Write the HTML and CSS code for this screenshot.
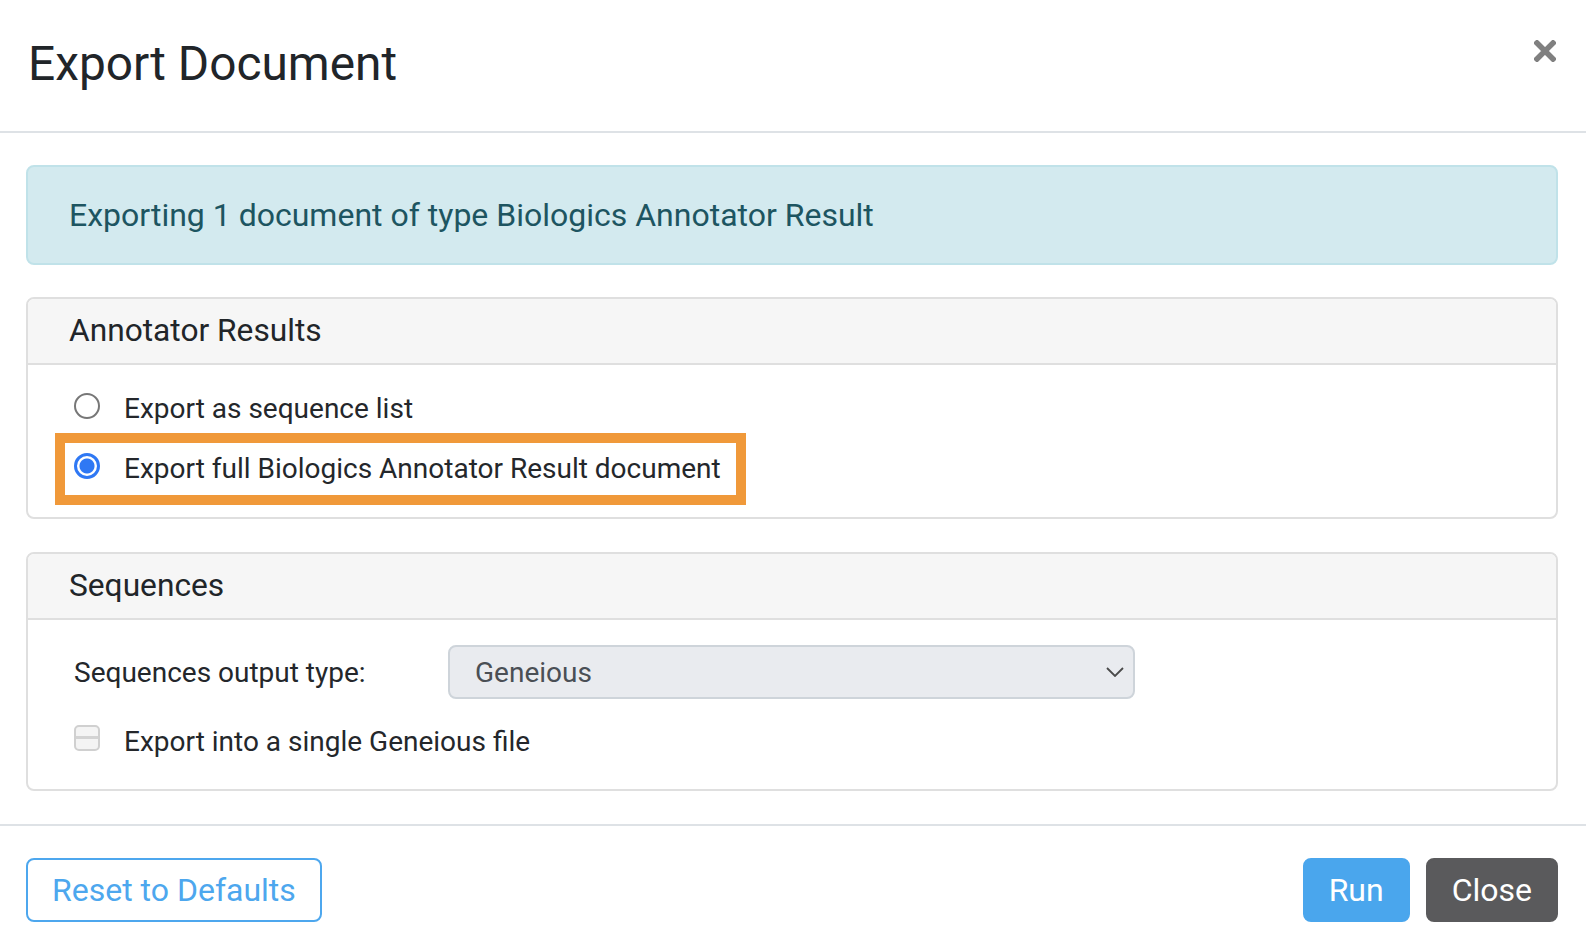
FILE: index.html
```html
<!DOCTYPE html>
<html lang="en">
<head>
    <meta charset="UTF-8">
    <title>Export Document</title>
    <link rel="stylesheet" href="styles.css">
</head>
<body>

<div class="modal">
    <div class="modal-header">
        <h4 class="modal-title">Export Document</h4>
        <svg class="close" width="22" height="22" viewBox="0 0 22 22">
            <path d="M3 3 L19 19 M19 3 L3 19" stroke="#808080" stroke-width="5.5" stroke-linecap="square"/>
        </svg>
    </div>

    <div class="modal-body">
        <div class="alert">Exporting 1 document of type Biologics Annotator Result</div>

        <div class="card">
            <div class="card-header">Annotator Results</div>
            <div class="card-body options">
                <div class="radio-row">
                    <span class="radio"></span>
                    <span class="option-label">Export as sequence list</span>
                </div>
                <div class="radio-row highlight">
                    <span class="radio checked"></span>
                    <span class="option-label">Export full Biologics Annotator Result document</span>
                </div>
            </div>
        </div>

        <div class="card">
            <div class="card-header">Sequences</div>
            <div class="card-body sequences">
                <div class="field-row">
                    <span class="field-label">Sequences output type:</span>
                    <div class="select">
                        <span>Geneious</span>
                        <svg width="18" height="10" viewBox="0 0 18 10">
                            <path d="M1 1 L9 9 L17 1" fill="none" stroke="#4a4a4a" stroke-width="1.8"/>
                        </svg>
                    </div>
                </div>
                <div class="check-row">
                    <span class="checkbox"></span>
                    <span class="option-label">Export into a single Geneious file</span>
                </div>
            </div>
        </div>
    </div>

    <div class="modal-footer">
        <button class="btn btn-outline">Reset to Defaults</button>
        <div class="actions">
            <button class="btn btn-primary">Run</button>
            <button class="btn btn-dark">Close</button>
        </div>
    </div>
</div>

</body>
</html>
```

FILE: styles.css
```css
body {
    margin: 0;
    padding: 0;
    background: #fff;
    font-family: Roboto, 'Liberation Sans', sans-serif;
    color: #212529;
}
.modal {
    width: 1586px;
    height: 944px;
    box-sizing: border-box;
}
.modal-header {
    display: flex;
    justify-content: space-between;
    align-items: flex-start;
    padding: 35px 30px 38px 28px;
    border-bottom: 2px solid #dee2e6;
}
.modal-title {
    margin: 0;
    font-size: 47.8px;
    font-weight: 400;
    line-height: 58px;
}
.close {
    margin-top: 5px;
}
.modal-body {
    padding: 32px 28px 33px 26px;
}
.alert {
    padding: 24px 40px 24px 41px;
    background: #d3eaef;
    border: 2px solid #c0e2e9;
    border-radius: 8px;
    color: #1d5561;
    font-size: 32px;
    line-height: 48px;
}
.card {
    margin-top: 32px;
    border: 2px solid #dfdfdf;
    border-radius: 8px;
}
.card + .card {
    margin-top: 33px;
}
.card-header {
    padding: 8px 41px;
    background: #f6f6f6;
    border-bottom: 2px solid #dfdfdf;
    border-radius: 6px 6px 0 0;
    font-size: 31.7px;
    line-height: 48px;
}
.card-body {
    padding-left: 46px;
}
.options {
    padding-top: 14px;
    padding-bottom: 18px;
}
.radio-row {
    display: flex;
    align-items: flex-start;
    width: fit-content;
    height: 60px;
}
.option-label {
    font-size: 28px;
    line-height: 60px;
    color: #24272b;
    margin-left: 24px;
}
.radio {
    width: 26px;
    height: 26px;
    box-sizing: border-box;
    margin-top: 14px;
    border: 2px solid #777;
    border-radius: 50%;
    background: #fff;
}
.radio.checked {
    border: 3px solid #2f78f4;
    background: radial-gradient(circle, #2f78f4 7px, #fff 8px);
}
.highlight {
    position: relative;
}
.highlight::after {
    content: "";
    position: absolute;
    top: -6px;
    bottom: -6px;
    left: -19px;
    right: -25px;
    border: 10px solid #f0993a;
}
.sequences {
    padding-top: 25px;
    padding-bottom: 26px;
}
.field-row {
    display: grid;
    grid-template-columns: 374px 687px;
    align-items: center;
}
.field-label {
    font-size: 28px;
    line-height: 40px;
    color: #24272b;
    padding-top: 2px;
}
.select {
    display: flex;
    justify-content: space-between;
    align-items: center;
    height: 54px;
    box-sizing: border-box;
    padding: 0 9px 0 25px;
    background: #e9ebef;
    border: 2px solid #ced4da;
    border-radius: 8px;
    font-size: 28px;
    color: #4a4f55;
}
.check-row {
    display: flex;
    align-items: flex-start;
    margin-top: 22px;
    height: 42px;
}
.check-row .option-label {
    line-height: 42px;
}
.checkbox {
    width: 26px;
    height: 26px;
    box-sizing: border-box;
    margin-top: 4px;
    border: 2px solid #d0d0d0;
    border-radius: 5px;
    background: linear-gradient(#f4f4f4 0 9px, #d3d3d3 9px 12px, #f4f4f4 12px);
}
.modal-footer {
    display: flex;
    justify-content: space-between;
    align-items: center;
    padding: 32px 28px 20px 26px;
    border-top: 2px solid #dee2e6;
}
.actions {
    display: flex;
    gap: 16px;
}
.btn {
    height: 64px;
    padding: 0 24px;
    border: 2px solid transparent;
    border-radius: 8px;
    font-family: Roboto, 'Liberation Sans', sans-serif;
    font-size: 32px;
    cursor: pointer;
}
.btn-outline {
    background: #fff;
    border-color: #4da7ee;
    color: #4da7ee;
}
.btn-primary {
    background: #4aa6ed;
    border-color: #4aa6ed;
    color: #fff;
}
.btn-dark {
    background: #5a5a5c;
    border-color: #5a5a5c;
    color: #fff;
}
```
